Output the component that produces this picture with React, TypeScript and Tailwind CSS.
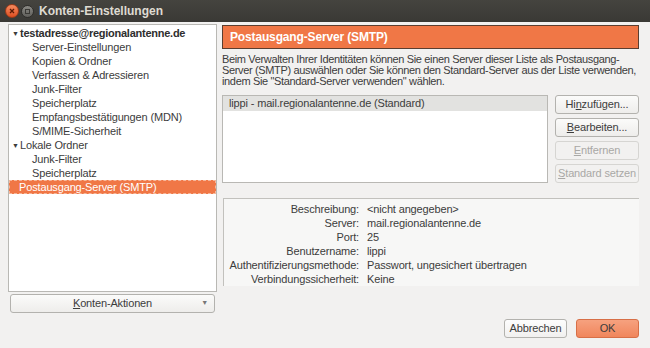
import React from "react";

const font = { fontFamily: '"Liberation Sans", Arial, sans-serif' };

type TreeItem = { label: string; level: 0 | 1; bold?: boolean; arrow?: boolean; selected?: boolean };

const tree: TreeItem[] = [
    { label: "testadresse@regionalantenne.de", level: 0, bold: true, arrow: true },
    { label: "Server-Einstellungen", level: 1 },
    { label: "Kopien & Ordner", level: 1 },
    { label: "Verfassen & Adressieren", level: 1 },
    { label: "Junk-Filter", level: 1 },
    { label: "Speicherplatz", level: 1 },
    { label: "Empfangsbestätigungen (MDN)", level: 1 },
    { label: "S/MIME-Sicherheit", level: 1 },
    { label: "Lokale Ordner", level: 0, arrow: true },
    { label: "Junk-Filter", level: 1 },
    { label: "Speicherplatz", level: 1 },
    { label: "Postausgang-Server (SMTP)", level: 0, selected: true },
];

const details: [string, string][] = [
    ["Beschreibung:", "<nicht angegeben>"],
    ["Server:", "mail.regionalantenne.de"],
    ["Port:", "25"],
    ["Benutzername:", "lippi"],
    ["Authentifizierungsmethode:", "Passwort, ungesichert übertragen"],
    ["Verbindungssicherheit:", "Keine"],
];

function SideButton({ children, disabled }: { children: React.ReactNode; disabled?: boolean }) {
    return (
        <button
            className={
                disabled
                    ? "h-[19px] w-full rounded-[3px] border border-[#d6d5d2] bg-[#f2f1f0] text-[11px] tracking-[-0.15px] text-[#a9a8a5]"
                    : "h-[19px] w-full rounded-[3px] border border-[#b3b2ae] bg-gradient-to-b from-[#fbfbfa] to-[#eeedeb] text-[11px] tracking-[-0.15px] text-[#3c3c3c]"
            }
        >
            {children}
        </button>
    );
}

export default function App() {
    return (
        <div style={font} className="w-[650px] h-[348px] bg-[#f2f1f0] flex flex-col overflow-hidden text-[#3c3c3c] tracking-[-0.15px]">
            {/* title bar */}
            <div className="h-[22px] shrink-0 bg-gradient-to-b from-[#45443f] to-[#3a3935] flex items-center pl-[5px]">
                <div className="w-[14px] h-[14px] rounded-full bg-gradient-to-b from-[#f58a5e] to-[#df4e1f] border border-[#9c3a18] flex items-center justify-center">
                    <svg width="6" height="6" viewBox="0 0 6 6">
                        <path d="M1 1L5 5M5 1L1 5" stroke="#5a1a05" strokeWidth="1.3" />
                    </svg>
                </div>
                <div className="ml-[2px] w-[13px] h-[13px] rounded-full bg-gradient-to-b from-[#8a8984] to-[#5f5e5a] border border-[#2e2d2a] flex items-center justify-center">
                    <div className="w-[5px] h-[5px] border border-[#3a3935]" />
                </div>
                <span className="ml-[5px] text-[12px] font-bold tracking-normal text-[#dfdbd2]">Konten-Einstellungen</span>
            </div>

            <div className="flex flex-1 pl-[8px] pr-[11px] pt-[2px]">
                {/* left column */}
                <div className="w-[209px] flex flex-col">
                    <div className="h-[268px] bg-white border border-[#b9b8b4] pt-[1px] text-[11px]">
                        {tree.map((item, i) => (
                            <div
                                key={i}
                                className={
                                    item.selected
                                        ? "h-[14px] flex items-center bg-[#f07746] text-white border border-dashed border-[#f7b79a] pl-[9px]"
                                        : "h-[14px] flex items-center " + (item.level === 0 ? "pl-[3px]" : "pl-[23px]")
                                }
                            >
                                {item.arrow && <span className="text-[7px] w-[7px] mr-[1px] leading-none">▼</span>}
                                <span className={item.bold ? "font-bold text-[#2e2e2e] tracking-[-0.25px]" : ""}>{item.label}</span>
                            </div>
                        ))}
                    </div>
                    <button className="mt-[2px] mx-[2px] h-[19px] rounded-[3px] border border-[#b3b2ae] bg-gradient-to-b from-[#fbfbfa] to-[#eeedeb] text-[11px] relative flex items-center justify-center">
                        <span>
                            <span className="underline">K</span>onten-Aktionen
                        </span>
                        <span className="absolute right-[6px] text-[7px] text-[#777]">▼</span>
                    </button>
                </div>

                {/* right column */}
                <div className="flex-1 ml-[5px] flex flex-col">
                    <div className="h-[24px] mt-[1px] bg-[#f07746] border border-[#5b3e30] flex items-center pl-[7px] text-[12px] font-bold text-white">
                        Postausgang-Server (SMTP)
                    </div>
                    <p className="mt-[5px] text-[11px] leading-[11px] tracking-[-0.35px]">
                        Beim Verwalten Ihrer Identitäten können Sie einen Server dieser Liste als Postausgang-Server (SMTP) auswählen oder Sie können den Standard-Server aus der Liste verwenden, indem Sie "Standard-Server verwenden" wählen.
                    </p>
                    <div className="flex mt-[8px] gap-[7px]">
                        <div className="w-[326px] h-[88px] bg-white border border-[#b9b8b4]">
                            <div className="h-[15px] bg-[#e2e2e0] flex items-center pl-[6px] text-[11px]">
                                lippi - mail.regionalantenne.de (Standard)
                            </div>
                        </div>
                        <div className="flex-1 flex flex-col gap-[4px]">
                            <SideButton>
                                Hi<span className="underline">n</span>zufügen...
                            </SideButton>
                            <SideButton>
                                <span className="underline">B</span>earbeiten...
                            </SideButton>
                            <SideButton disabled>
                                <span className="underline">E</span>ntfernen
                            </SideButton>
                            <SideButton disabled>
                                <span className="underline">S</span>tandard setzen
                            </SideButton>
                        </div>
                    </div>
                    <div className="mt-[15px] ml-[1px] h-[88px] bg-[#f7f7f6] border-l border-t border-[#c2c1bd] pt-[3px] text-[11px]">
                        {details.map(([k, v]) => (
                            <div key={k} className="h-[14px] flex items-center">
                                <span className="w-[135px] text-right">{k}</span>
                                <span className="ml-[8px]">{v}</span>
                            </div>
                        ))}
                    </div>
                    <div className="mt-auto mb-[10px] flex justify-end gap-[9px]">
                        <button className="h-[19px] w-[63px] rounded-[3px] border border-[#b3b2ae] bg-gradient-to-b from-[#fdfdfd] to-[#f1f0ef] text-[11px]">
                            Abbrechen
                        </button>
                        <button className="h-[19px] w-[63px] rounded-[3px] border border-[#d76f47] bg-gradient-to-b from-[#f6a17f] to-[#f0865c] text-[11px]">
                            OK
                        </button>
                    </div>
                </div>
            </div>
        </div>
    );
}
